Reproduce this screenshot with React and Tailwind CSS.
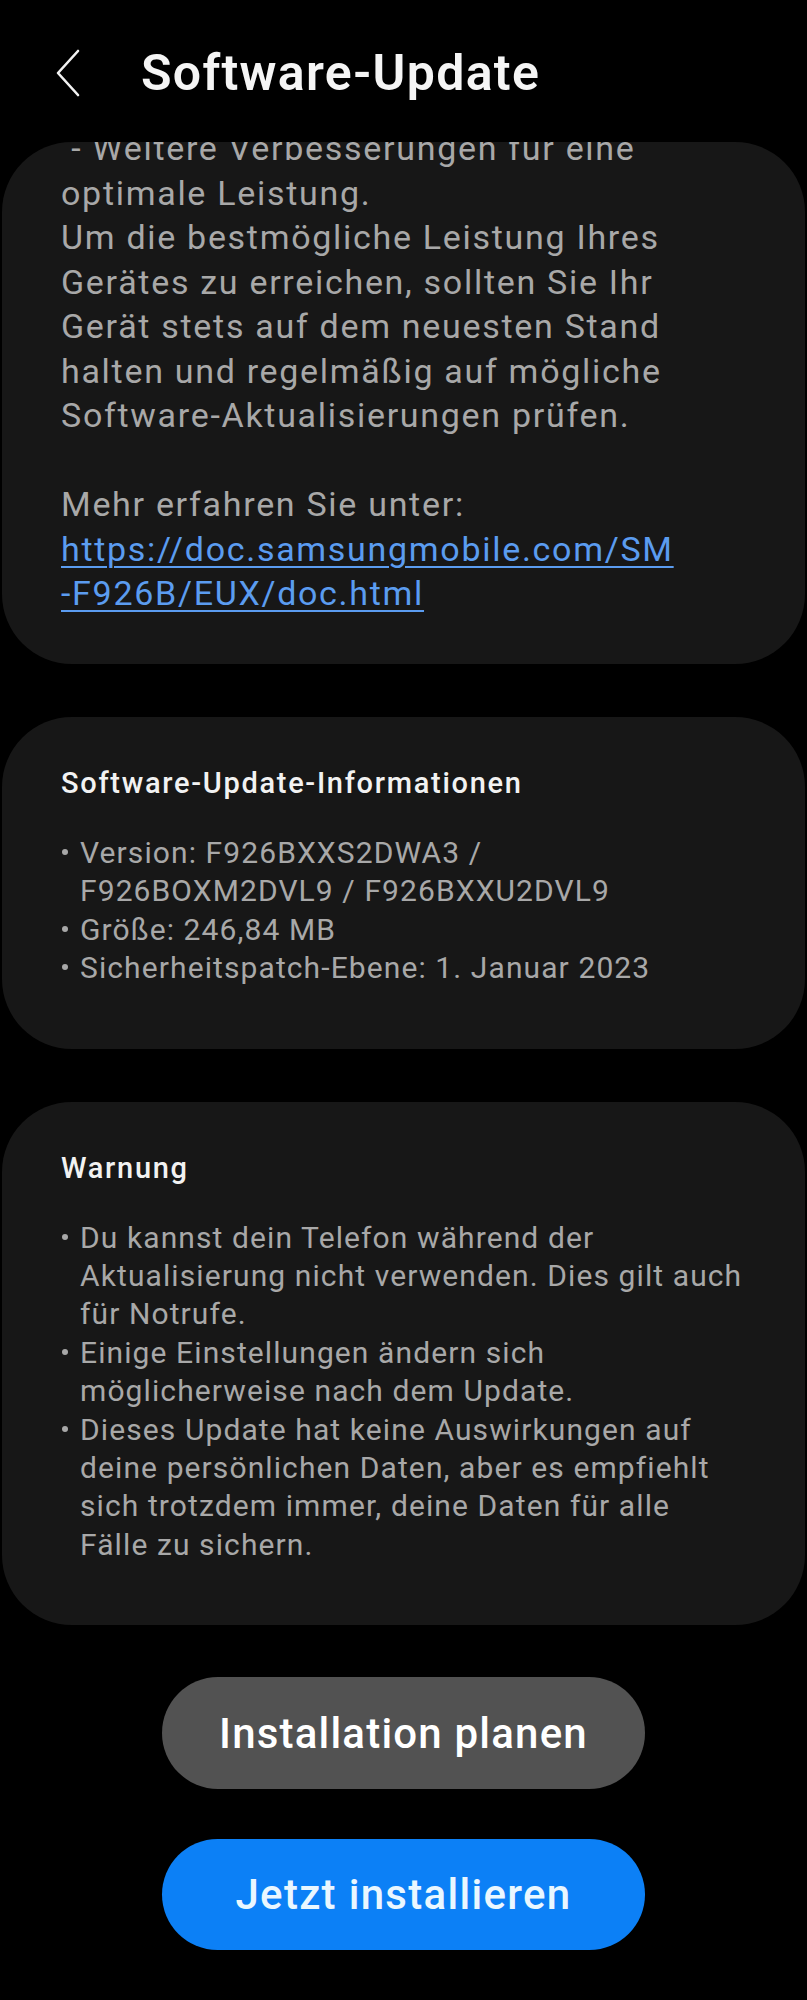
import React from "react";

const BackIcon = () => (
  <svg width="26" height="48" viewBox="0 0 26 48" fill="none" className="shrink-0">
    <path d="M23 2 L3 24 L23 46" stroke="#f2f2f2" strokeWidth="2.6" strokeLinecap="round" strokeLinejoin="round" />
  </svg>
);

const Card = ({ children, className = "" }) => (
  <div className={`mx-[2px] rounded-[70px] bg-[#171717] overflow-hidden ${className}`}>{children}</div>
);

const BulletList = ({ items }) => (
  <ul className="text-[30px] leading-[38.4px] tracking-[1.1px] text-[#a8a8a8]">
    {items.map((item, i) => (
      <li key={i} className="flex items-start">
        <span className="w-[19px] shrink-0 pt-[15px] pl-[1px]">
          <span className="block w-[6px] h-[6px] rounded-full bg-[#a8a8a8]" />
        </span>
        <span className="whitespace-nowrap">{item}</span>
      </li>
    ))}
  </ul>
);

const InfoCard = ({ title, items }) => (
  <Card className="pt-[48px] pb-[61px] pl-[59px] pr-[20px]">
    <h2 className="text-[29px] leading-[36px] tracking-[1.7px] font-medium text-[#f2f2f2]">{title}</h2>
    <div className="mt-[33px]">
      <BulletList items={items} />
    </div>
  </Card>
);

export default function App() {
  return (
    <div className="min-h-[2000px] bg-black font-['Roboto','Noto_Sans',sans-serif] antialiased">
      {/* header */}
      <div className="h-[142px] pt-[4px] pl-[55px] flex items-center gap-[60px]">
        <BackIcon />
        <h1 className="text-[50px] font-semibold tracking-[1.3px] text-[#f5f5f5]">Software-Update</h1>
      </div>

      <div className="flex flex-col gap-[53px]">
        {/* scrolled release notes */}
        <Card className="h-[522px] pl-[59px] pr-[20px]">
          <div className="-mt-[16px] text-[34px] leading-[44.5px] tracking-[1.7px] text-[#a8a8a8] whitespace-nowrap">
            <p>
              {"\u00a0- Weitere Verbesserungen für eine"}
              <br />
              optimale Leistung.
              <br />
              Um die bestmögliche Leistung Ihres
              <br />
              Gerätes zu erreichen, sollten Sie Ihr
              <br />
              Gerät stets auf dem neuesten Stand
              <br />
              halten und regelmäßig auf mögliche
              <br />
              Software-Aktualisierungen prüfen.
            </p>
            <p className="mt-[44.5px]">Mehr erfahren Sie unter:</p>
            <a className="block text-[#5b9cf0] underline decoration-[2px] underline-offset-[5px]">
              https://doc.samsungmobile.com/SM
              <br />
              -F926B/EUX/doc.html
            </a>
          </div>
        </Card>

        <InfoCard
          title="Software-Update-Informationen"
          items={[
            <>
              Version: F926BXXS2DWA3 /
              <br />
              F926BOXM2DVL9 / F926BXXU2DVL9
            </>,
            "Größe: 246,84 MB",
            "Sicherheitspatch-Ebene: 1. Januar 2023",
          ]}
        />

        <InfoCard
          title="Warnung"
          items={[
            <>
              Du kannst dein Telefon während der
              <br />
              Aktualisierung nicht verwenden. Dies gilt auch
              <br />
              für Notrufe.
            </>,
            <>
              Einige Einstellungen ändern sich
              <br />
              möglicherweise nach dem Update.
            </>,
            <>
              Dieses Update hat keine Auswirkungen auf
              <br />
              deine persönlichen Daten, aber es empfiehlt
              <br />
              sich trotzdem immer, deine Daten für alle
              <br />
              Fälle zu sichern.
            </>,
          ]}
        />
      </div>

      {/* actions */}
      <div className="mt-[52px] flex flex-col items-center gap-[50px]">
        <button className="w-[483px] h-[112px] rounded-full bg-[#525252] text-[42px] font-medium tracking-[1.2px] text-white">
          Installation planen
        </button>
        <button className="w-[483px] h-[111px] rounded-full bg-[#0c80f6] text-[42px] font-medium tracking-[1.3px] text-[#eaf7ff]">
          Jetzt installieren
        </button>
      </div>
    </div>
  );
}
